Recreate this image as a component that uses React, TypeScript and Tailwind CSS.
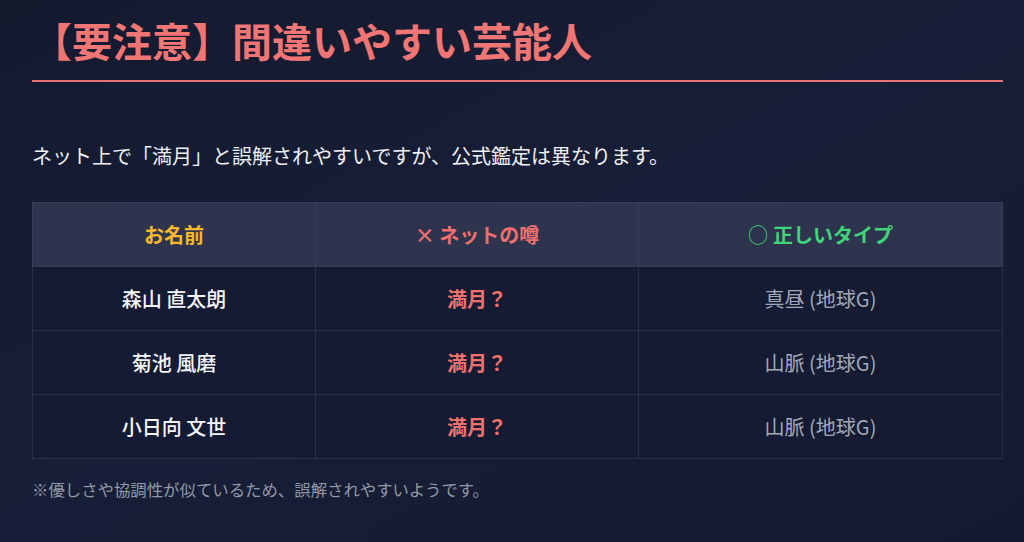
import React from 'react';

const rows = [
  { name: '森山 直太朗', rumor: '満月？', type: '真昼 (地球G)' },
  { name: '菊池 風磨', rumor: '満月？', type: '山脈 (地球G)' },
  { name: '小日向 文世', rumor: '満月？', type: '山脈 (地球G)' },
];

export default function App() {
  return (
    <div
      className="h-[542px] w-[1024px] overflow-hidden bg-gradient-to-br from-[#141a2e] via-[#171e37] to-[#141a30] pl-[32px] pr-[21px]"
      style={{ fontFamily: '"Noto Sans CJK JP", "Noto Sans", sans-serif' }}
    >
      <div className="border-b-2 border-[#e57373] pb-[12px] pt-[12px]">
        <h1 className="text-[40px] font-bold leading-[56px] text-[#f07575]">
          【要注意】間違いやすい芸能人
        </h1>
      </div>

      <p className="mt-[59px] text-[20px] leading-[30px] text-[#eef0f6]">
        ネット上で「満月」と誤解されやすいですが、公式鑑定は異なります。
      </p>

      <table className="mt-[31px] w-full table-fixed border-collapse">
        <colgroup>
          <col className="w-[283px]" />
          <col className="w-[323px]" />
          <col />
        </colgroup>
        <thead>
          <tr className="h-[64px] bg-[#2e344d]">
            <th className="border border-[#373e5a] text-[20px] font-bold text-[#f5b92c]">
              お名前
            </th>
            <th className="border border-[#373e5a] text-[20px] font-bold text-[#f07070]">
              × ネットの噂
            </th>
            <th className="border border-[#373e5a] text-[20px] font-bold text-[#3fd57a]">
              <span className="mr-[5px] font-normal">○</span>正しいタイプ
            </th>
          </tr>
        </thead>
        <tbody>
          {rows.map((r) => (
            <tr key={r.name} className="h-[64px] bg-[#151b33]">
              <td className="border border-[#283049] text-center text-[20px] font-medium text-[#f4f5f8]">
                {r.name}
              </td>
              <td className="border border-[#283049] text-center text-[20px] font-bold text-[#f07070]">
                {r.rumor}
              </td>
              <td className="border border-[#283049] text-center text-[20px] text-[#a3a8b8]">
                {r.type}
              </td>
            </tr>
          ))}
        </tbody>
      </table>

      <p className="mt-[18px] text-[16.4px] leading-[24px] text-[#9499a8]">
        ※優しさや協調性が似ているため、誤解されやすいようです。
      </p>
    </div>
  );
}
